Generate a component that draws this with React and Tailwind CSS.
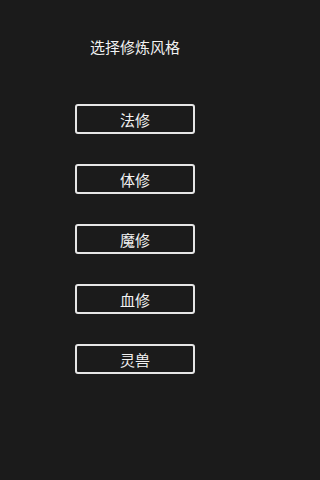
export default function App() {
  const items = ["法修", "体修", "魔修", "血修", "灵兽"];
  return (
    <div className="w-full min-h-screen bg-[#1b1b1b]">
      <div
        className="w-[270px] h-[480px] flex flex-col items-center pt-[36px] text-[#f2f2f2]"
        style={{ fontFamily: '"Noto Sans CJK SC", "Noto Sans", sans-serif' }}
      >
        <div className="text-[15px] leading-[22px]">选择修炼风格</div>
        <div className="mt-[46px] flex flex-col gap-[30px]">
          {items.map((t) => (
            <button
              key={t}
              className="w-[120px] h-[30px] border-2 border-[#e6e6e6] rounded-[3px] bg-transparent text-[15px] leading-none text-[#f2f2f2] flex items-center justify-center"
            >
              {t}
            </button>
          ))}
        </div>
      </div>
    </div>
  );
}
